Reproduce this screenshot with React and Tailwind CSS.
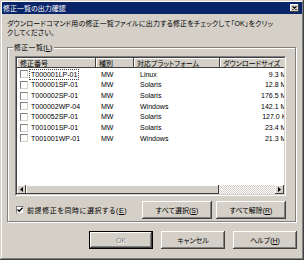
import React from 'react';

const rows = [
    { id: 'T000001LP-01', kind: 'MW', os: 'Linux', size: '9.3 MB' },
    { id: 'T000001SP-01', kind: 'MW', os: 'Solaris', size: '12.8 MB' },
    { id: 'T000002SP-01', kind: 'MW', os: 'Solaris', size: '176.5 MB' },
    { id: 'T000002WP-04', kind: 'MW', os: 'Windows', size: '142.1 MB' },
    { id: 'T000052SP-01', kind: 'MW', os: 'Solaris', size: '127.0 KB' },
    { id: 'T001001SP-01', kind: 'MW', os: 'Solaris', size: '23.4 MB' },
    { id: 'T001001WP-01', kind: 'MW', os: 'Windows', size: '21.3 MB' },
];

// win2000 style bevels
const raised = 'bg-[#d4d0c8] shadow-[inset_-1px_-1px_#404040,inset_1px_1px_#ffffff,inset_-2px_-2px_#808080,inset_2px_2px_#d4d0c8]';
const thin = 'bg-[#d4d0c8] shadow-[inset_-1px_-1px_#404040,inset_1px_1px_#ffffff]';

const Arrow = ({ dir }) => (
    <svg width="3" height="5" viewBox="0 0 3 5">
        {dir === 'left'
            ? <polygon points="3,0 3,5 0,2.5" fill="#000" />
            : <polygon points="0,0 0,5 3,2.5" fill="#000" />}
    </svg>
);

const Box = ({ checked }) => (
    <div className="w-[8px] h-[8px] bg-white border border-[#808080] border-r-[#d4d0c8] border-b-[#d4d0c8] flex items-center justify-center shrink-0">
        {checked && (
            <svg width="6" height="6" viewBox="0 0 6 6">
                <polyline points="0.5,2.5 2.2,4.3 5.5,0.8" fill="none" stroke="#000" strokeWidth="1.3" />
            </svg>
        )}
    </div>
);

const Button = ({ children, w, isDefault, disabled }) => (
    <div className={`h-[18px] ${w} flex items-center justify-center ${isDefault ? 'border border-black' : ''}`}>
        <div className={`w-full h-full flex items-center justify-center ${raised} ${disabled ? 'text-[#808080] [text-shadow:1px_1px_#ffffff]' : 'text-black'}`}>
            {children}
        </div>
    </div>
);

export default function App() {
    return (
        <div
            className="w-[304px] h-[260px] bg-[#d4d0c8] p-[2px] flex flex-col text-[7px] leading-[9px] text-black shadow-[inset_-1px_-1px_#404040,inset_1px_1px_#d4d0c8,inset_-2px_-2px_#808080,inset_2px_2px_#ffffff] overflow-hidden [font-feature-settings:'palt']"
            style={{ fontFamily: '"Liberation Sans", "Noto Sans CJK JP", sans-serif' }}
        >
            {/* title bar */}
            <div className="h-[12px] bg-[#0a246a] flex items-center justify-between pl-[1px] pr-[3px] shrink-0">
                <span className="text-white text-[7px]">修正一覧の出力確認</span>
                <div className={`w-[9px] h-[8px] ${thin} flex items-center justify-center`}>
                    <svg width="5" height="4" viewBox="0 0 5 4">
                        <path d="M0.5 0.3 L4.5 3.7 M4.5 0.3 L0.5 3.7" stroke="#000" strokeWidth="1.1" />
                    </svg>
                </div>
            </div>

            {/* message */}
            <div className="mt-[5px] ml-[5px] whitespace-nowrap tracking-[0.15px]">
                ダウンロードコマンド用の修正一覧ファイルに出力する修正をチェックして「OK」をクリッ
                <br />
                クしてください。
            </div>

            {/* group box */}
            <div className="mt-[10px] ml-[5px] mr-[6px] relative border border-[#808080] shadow-[1px_1px_#ffffff,inset_1px_1px_#ffffff] pt-[8px] pl-[7px] pb-[2px]">
                <span className="absolute -top-[5px] left-[5px] bg-[#d4d0c8] px-[1px] tracking-[0.3px]">
                    修正一覧(<u>L</u>)
                </span>

                {/* list view */}
                <div className="w-[271px] h-[140px] border border-[#808080] border-r-white border-b-white">
                    <div className="w-full h-full border border-[#404040] border-r-[#d4d0c8] border-b-[#d4d0c8] bg-white flex flex-col overflow-hidden">
                        <div className="flex h-[10px] shrink-0 whitespace-nowrap">
                            <div className={`w-[79px] shrink-0 ${thin} pl-[3px] flex items-center`}>修正番号</div>
                            <div className={`w-[38px] shrink-0 ${thin} pl-[3px] flex items-center`}>種別</div>
                            <div className={`w-[86px] shrink-0 ${thin} pl-[3px] flex items-center`}>対応プラットフォーム</div>
                            <div className={`w-[75px] shrink-0 ${thin} pl-[3px] flex items-center`}>ダウンロードサイズ</div>
                        </div>
                        <div className="flex-1 pt-[1px]">
                            {rows.map((r, i) => (
                                <div key={r.id} className="flex h-[10.67px] items-center whitespace-nowrap">
                                    <div className="w-[79px] shrink-0 flex items-center pl-[3px] gap-[2px]">
                                        <Box />
                                        <span className={`px-[1px] ${i === 0 ? 'outline outline-1 outline-dotted outline-[#404040]' : ''}`}>{r.id}</span>
                                    </div>
                                    <div className="w-[38px] shrink-0 pl-[5px]">{r.kind}</div>
                                    <div className="w-[86px] shrink-0 pl-[6px]">{r.os}</div>
                                    <div className="w-[75px] shrink-0 pr-[4px] text-right">{r.size}</div>
                                </div>
                            ))}
                        </div>
                        {/* horizontal scrollbar */}
                        <div className="h-[9px] flex shrink-0">
                            <div className={`w-[9px] ${thin} flex items-center justify-center`}><Arrow dir="left" /></div>
                            <div className={`w-[193px] ${thin}`} />
                            <div className="flex-1 bg-[repeating-conic-gradient(#ffffff_0_25%,#d4d0c8_0_50%)] bg-[length:2px_2px]" />
                            <div className={`w-[9px] ${thin} flex items-center justify-center`}><Arrow dir="right" /></div>
                        </div>
                    </div>
                </div>

                {/* options row */}
                <div className="w-[271px] mt-[5px] flex items-center">
                    <div className="flex-1 flex items-center gap-[3px] pl-[1px] whitespace-nowrap">
                        <Box checked />
                        <span className="tracking-[0.6px]">前提修正を同時に選択する(<u>E</u>)</span>
                    </div>
                    <div className="flex gap-[4px]">
                        <Button w="w-[70px]">すべて選択(<u>S</u>)</Button>
                        <Button w="w-[70px]">すべて解除(<u>R</u>)</Button>
                    </div>
                </div>
            </div>

            {/* dialog buttons */}
            <div className="mt-[9px] mr-[5px] flex justify-end gap-[8px]">
                <Button w="w-[64px]" isDefault disabled>OK</Button>
                <Button w="w-[64px]">キャンセル</Button>
                <Button w="w-[64px]">ヘルプ(<u>H</u>)</Button>
            </div>
        </div>
    );
}
